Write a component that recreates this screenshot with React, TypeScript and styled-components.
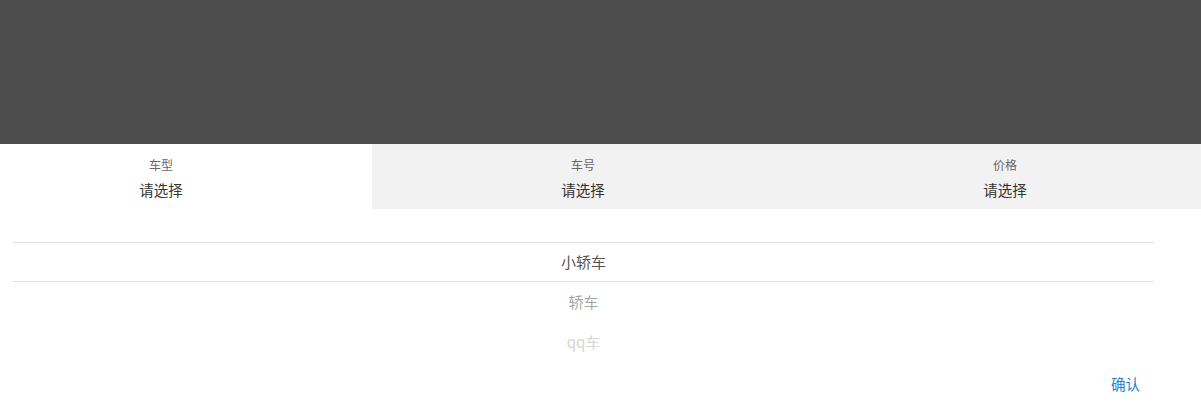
import React from "react";
import styled, { createGlobalStyle } from "styled-components";

const Global = createGlobalStyle`
  html, body { margin: 0; padding: 0; background: #fff; }
  body { font-family: "Noto Sans CJK SC", "Noto Sans", sans-serif; overflow: hidden; }
`;

const Page = styled.div`
  width: 1201px;
  height: 402px;
  overflow: hidden;
  display: flex;
  flex-direction: column;
  background: #fff;
`;

const Mask = styled.div`
  height: 144px;
  flex: none;
  background: #4d4d4d;
`;

const Tabs = styled.div`
  display: grid;
  grid-template-columns: repeat(3, 422px);
  margin-left: -50px;
  height: 65px;
  flex: none;
  background: #f2f2f2;
`;

const Tab = styled.div<{ $active?: boolean }>`
  display: flex;
  flex-direction: column;
  align-items: center;
  justify-content: flex-start;
  padding-top: 12px;
  background: ${(p) => (p.$active ? "#fff" : "#f2f2f2")};
`;

const TabLabel = styled.div`
  font-size: 12px;
  line-height: 18px;
  color: #666;
`;

const TabValue = styled.div`
  font-size: 14.5px;
  line-height: 20px;
  margin-top: 6px;
  color: #333;
`;

const Picker = styled.div`
  margin-left: 13px;
  width: 1141px;
  padding-top: 33px;
  display: flex;
  flex-direction: column;
`;

const Item = styled.div<{ $tone: string; $selected?: boolean }>`
  height: 40px;
  box-sizing: border-box;
  display: flex;
  align-items: center;
  justify-content: center;
  padding-bottom: 2px;
  font-size: 15px;
  color: ${(p) => p.$tone};
  border-top: ${(p) => (p.$selected ? "1px solid #e0e0e0" : "none")};
  border-bottom: ${(p) => (p.$selected ? "1px solid #e0e0e0" : "none")};
`;

const Footer = styled.div`
  display: flex;
  justify-content: flex-end;
  padding-right: 61px;
  padding-top: 12px;
`;

const Confirm = styled.button`
  border: none;
  background: none;
  padding: 0;
  font-family: inherit;
  font-size: 14.5px;
  line-height: 20px;
  color: #1c7fd1;
  cursor: pointer;
`;

const tabs = [
  { label: "车型", value: "请选择", active: true },
  { label: "车号", value: "请选择" },
  { label: "价格", value: "请选择" },
];

export default function App() {
  return (
    <Page>
      <Global />
      <Mask />
      <Tabs>
        {tabs.map((t) => (
          <Tab key={t.label} $active={t.active}>
            <TabLabel>{t.label}</TabLabel>
            <TabValue>{t.value}</TabValue>
          </Tab>
        ))}
      </Tabs>
      <Picker>
        <Item $tone="#555" $selected>小轿车</Item>
        <Item $tone="#a6a6a6">轿车</Item>
        <Item $tone="#d6d6d6">qq车</Item>
      </Picker>
      <Footer>
        <Confirm>确认</Confirm>
      </Footer>
    </Page>
  );
}
